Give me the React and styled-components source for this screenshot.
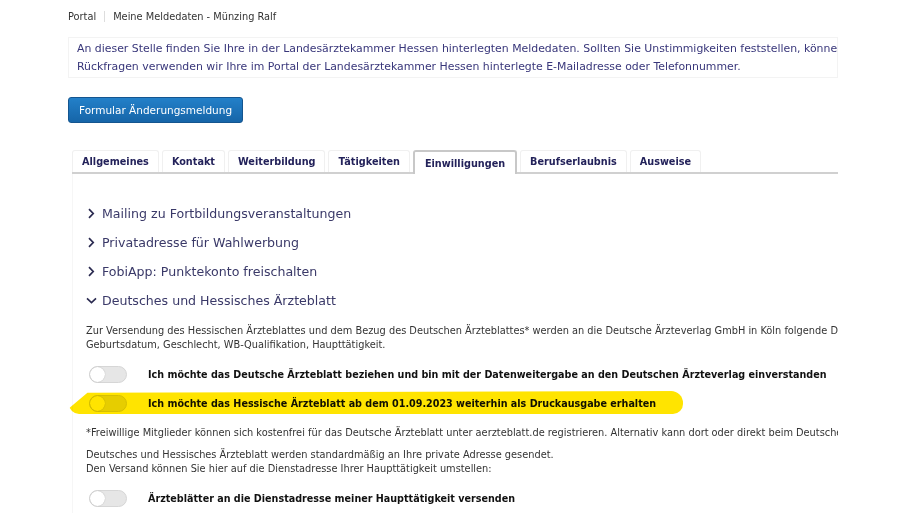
import React from 'react';
import styled, { createGlobalStyle } from 'styled-components';

const GlobalStyle = createGlobalStyle`
  html, body {
    margin: 0;
    padding: 0;
    background: #fff;
    font-family: "DejaVu Sans", Verdana, sans-serif;
  }
`;

const Page = styled.div`
  width: 770px;
  margin-left: 68px;
  overflow: hidden;
  padding-top: 9px;
`;

const Breadcrumb = styled.div`
  display: flex;
  align-items: center;
  font-size: 9.8px;
  color: #333;
  height: 14px;
`;

const Crumb = styled.span`
  padding-right: 8px;
  & + & {
    padding-left: 8px;
    border-left: 1px solid #ddd;
  }
`;

const InfoBox = styled.div`
  margin-top: 14px;
  border: 1px solid #f3f3f3;
  padding: 2px 8px 1px;
  font-size: 10.9px;
  line-height: 18px;
  color: #38367a;
  white-space: nowrap;
`;

const Button = styled.button`
  margin-top: 19px;
  height: 26px;
  padding: 0 10px;
  border: 1px solid #14558f;
  border-radius: 3px;
  background: linear-gradient(#2380c9, #1665a8);
  color: #fff;
  font-family: inherit;
  font-size: 10.5px;
`;

const TabBar = styled.div`
  display: flex;
  align-items: flex-end;
  gap: 3px;
  margin: 25px 0 0 4px;
  border-bottom: 2px solid #d0d0d0;
  height: 24px;
`;

const Tab = styled.div`
  height: ${p => (p.$active ? '24px' : '22px')};
  padding: 0 ${p => (p.$active ? '10px' : '9px')};
  display: flex;
  align-items: ${p => (p.$active ? 'flex-end' : 'center')};
  padding-bottom: ${p => (p.$active ? '5px' : '0')};
  box-sizing: border-box;
  font-size: 9.7px;
  font-weight: bold;
  color: #23225a;
  border: ${p => (p.$active ? '2px solid #c8c8c8' : '1px solid #f0f0f0')};
  border-bottom: none;
  border-radius: 3px 3px 0 0;
  margin-bottom: ${p => (p.$active ? '-2px' : '0')};
  background: #fff;
`;

const Panel = styled.div`
  margin-left: 4px;
  border-left: 1px solid #f6f6f6;
  padding: 25px 0 0 13px;
`;

const AccordionItem = styled.div`
  display: flex;
  align-items: center;
  gap: 5px;
  height: 29px;
  font-size: 12.6px;
  color: #3a3968;
`;

const Chevron = styled.svg`
  width: 11px;
  height: 11px;
  flex: none;
`;

const Text = styled.div`
  font-size: 9.8px;
  line-height: 14px;
  color: #333;
  white-space: nowrap;
  margin-top: ${p => p.$mt || 0}px;
`;

const ToggleRow = styled.div`
  position: relative;
  display: flex;
  align-items: center;
  height: 29px;
  padding-left: 3px;
  margin-top: ${p => p.$mt || 0}px;
`;

const Highlight = styled.span`
  position: absolute;
  left: -17px;
  top: 2px;
  width: 614px;
  height: 23px;
  background: #ffe400;
  mix-blend-mode: multiply;
  border-radius: 6px 12px 10px 10px;
  clip-path: polygon(0 75%, 3% 8%, 100% 0, 100% 100%, 0 100%);
  pointer-events: none;
`;

const Switch = styled.span`
  position: relative;
  width: 38px;
  height: 17px;
  box-sizing: border-box;
  border: 1px solid #d6d6d6;
  border-radius: 9px;
  background: #e6e6e6;
  flex: none;
  &::after {
    content: '';
    position: absolute;
    left: 0;
    top: 0;
    width: 15px;
    height: 15px;
    border-radius: 50%;
    background: #fff;
    box-shadow: 0 0 1px rgba(0,0,0,0.3);
  }
`;

const ToggleLabel = styled.span`
  margin-left: 21px;
  font-size: 9.6px;
  font-weight: bold;
  color: #111;
  white-space: nowrap;
`;

const ChevronRight = () => (
  <Chevron viewBox="0 0 11 11">
    <path d="M3 1.2 L7.2 5.5 L3 9.8" fill="none" stroke="#2a2a50" strokeWidth="1.7" />
  </Chevron>
);

const ChevronDown = () => (
  <Chevron viewBox="0 0 11 11">
    <path d="M1 3.3 L5.5 7.6 L10 3.3" fill="none" stroke="#2a2a50" strokeWidth="1.6" />
  </Chevron>
);

const tabs = ['Allgemeines', 'Kontakt', 'Weiterbildung', 'Tätigkeiten', 'Einwilligungen', 'Berufserlaubnis', 'Ausweise'];

const Toggle = ({ label, mt, highlight }) => (
  <ToggleRow $mt={mt}>
    <Switch />
    <ToggleLabel>{label}</ToggleLabel>
    {highlight && <Highlight />}
  </ToggleRow>
);

export default function App() {
  return (
    <>
      <GlobalStyle />
      <Page>
        <Breadcrumb>
          <Crumb>Portal</Crumb>
          <Crumb>Meine Meldedaten - Münzing Ralf</Crumb>
        </Breadcrumb>
        <InfoBox>
          An dieser Stelle finden Sie Ihre in der Landesärztekammer Hessen hinterlegten Meldedaten. Sollten Sie Unstimmigkeiten feststellen, können Sie uns gerne kontaktieren.
          <br />
          Rückfragen verwenden wir Ihre im Portal der Landesärztekammer Hessen hinterlegte E-Mailadresse oder Telefonnummer.
        </InfoBox>
        <Button>Formular Änderungsmeldung</Button>
        <TabBar>
          {tabs.map(t => (
            <Tab key={t} $active={t === 'Einwilligungen'}>{t}</Tab>
          ))}
        </TabBar>
        <Panel>
          <AccordionItem><ChevronRight />Mailing zu Fortbildungsveranstaltungen</AccordionItem>
          <AccordionItem><ChevronRight />Privatadresse für Wahlwerbung</AccordionItem>
          <AccordionItem><ChevronRight />FobiApp: Punktekonto freischalten</AccordionItem>
          <AccordionItem><ChevronDown />Deutsches und Hessisches Ärzteblatt</AccordionItem>
          <Text $mt={9}>
            Zur Versendung des Hessischen Ärzteblattes und dem Bezug des Deutschen Ärzteblattes* werden an die Deutsche Ärzteverlag GmbH in Köln folgende Daten übermittelt: Name, Anschrift,
            <br />
            Geburtsdatum, Geschlecht, WB-Qualifikation, Haupttätigkeit.
          </Text>
          <Toggle mt={8} label="Ich möchte das Deutsche Ärzteblatt beziehen und bin mit der Datenweitergabe an den Deutschen Ärzteverlag einverstanden" />
          <Toggle highlight label="Ich möchte das Hessische Ärzteblatt ab dem 01.09.2023 weiterhin als Druckausgabe erhalten" />
          <Text $mt={8}>
            *Freiwillige Mitglieder können sich kostenfrei für das Deutsche Ärzteblatt unter aerzteblatt.de registrieren. Alternativ kann dort oder direkt beim Deutschen Ärzteverlag
          </Text>
          <Text $mt={8}>
            Deutsches und Hessisches Ärzteblatt werden standardmäßig an Ihre private Adresse gesendet.
            <br />
            Den Versand können Sie hier auf die Dienstadresse Ihrer Haupttätigkeit umstellen:
          </Text>
          <Toggle mt={8} label="Ärzteblätter an die Dienstadresse meiner Haupttätigkeit versenden" />
        </Panel>
      </Page>
    </>
  );
}
